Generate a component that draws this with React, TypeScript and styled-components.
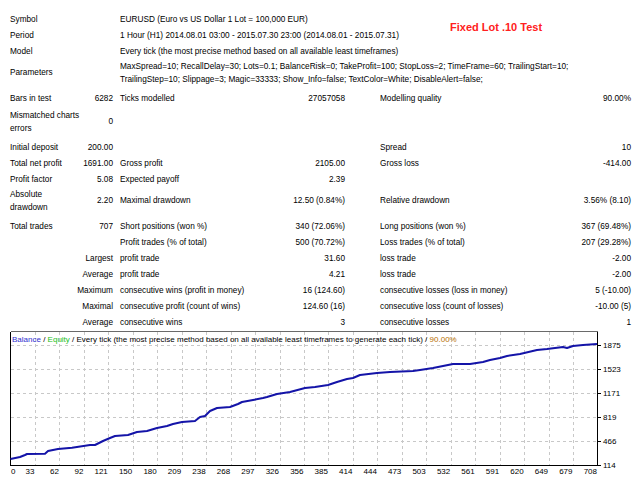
import React from "react";
import styled, { createGlobalStyle } from "styled-components";

const GlobalStyle = createGlobalStyle`
  html, body { margin: 0; padding: 0; background: #fff; }
  body {
    font-family: "Liberation Sans", Arial, sans-serif;
    font-size: 8.25px;
    color: #000;
  }
`;

const Page = styled.div`
  position: relative;
  width: 640px;
  height: 480px;
  overflow: hidden;
  box-sizing: border-box;
  padding: 11px 9px 0 10px;
`;

const Report = styled.div`
  position: relative;
  display: flex;
  flex-direction: column;
`;

const Title = styled.div`
  position: absolute;
  left: 440px;
  top: 9px;
  font-family: "Liberation Sans", Arial, sans-serif;
  font-weight: bold;
  font-size: 11px;
  line-height: 14px;
  color: #ff2020;
  white-space: nowrap;
`;

const Row = styled.div<{ $h?: number }>`
  display: grid;
  grid-template-columns: 73px 30px 147px 85px 185px 101px;
  height: ${(p) => p.$h ?? 16}px;
  align-items: center;
  line-height: 13px;
  white-space: nowrap;
`;

const Label = styled.div<{ $span?: number; $indent?: number; $right?: boolean }>`
  grid-column: span ${(p) => p.$span ?? 1};
  padding-left: ${(p) => p.$indent ?? 0}px;
  text-align: ${(p) => (p.$right ? "right" : "left")};
`;

const Value = styled.div<{ $span?: number }>`
  grid-column: span ${(p) => p.$span ?? 1};
  text-align: right;
`;

const Spacer = styled.div<{ $h: number }>`
  height: ${(p) => p.$h}px;
`;

const ChartBox = styled.div`
  margin-top: 1px;
  width: 630px;
  height: 149px;
`;

type Cells = (string | null)[];

const StatRow = ({ c }: { c: Cells }) => (
  <Row>
    <Label>{c[0]}</Label>
    <Value>{c[1]}</Value>
    <Label $indent={7}>{c[2]}</Label>
    <Value>{c[3]}</Value>
    <Label $indent={35}>{c[4]}</Label>
    <Value>{c[5]}</Value>
  </Row>
);

const SubRow = ({ c }: { c: Cells }) => (
  <Row>
    <Label $span={2} $right>
      {c[0]}
    </Label>
    <Label $indent={7}>{c[1]}</Label>
    <Value>{c[2]}</Value>
    <Label $indent={35}>{c[3]}</Label>
    <Value>{c[4]}</Value>
  </Row>
);

const InfoRow = ({ label, children, h }: { label: string; children: React.ReactNode; h?: number }) => (
  <Row $h={h}>
    <Label $span={2}>{label}</Label>
    <Label $span={4} $indent={7}>
      {children}
    </Label>
  </Row>
);

const curve: [number, number][] = [
  [10.5, 459], [20, 457], [25, 455], [27, 454], [45, 453.7], [48, 451], [58, 449], [72, 447.7],
  [90, 445], [95, 445], [103, 441], [110, 438], [115, 436], [128, 435], [137, 432], [147, 431],
  [157, 428], [167, 426], [173, 424], [182, 422], [195, 421], [200, 417], [205, 416], [210, 411],
  [217, 408], [230, 407], [238, 404], [242, 402], [253, 400], [263, 398], [267, 397], [277, 394],
  [290, 392], [305, 388], [315, 387], [328, 385], [337, 382], [347, 379], [353, 378], [360, 375],
  [377, 373], [390, 372], [413, 371], [420, 370], [433, 368], [443, 366], [453, 364], [470, 364],
  [483, 362], [490, 360], [500, 358], [507, 356], [520, 354], [537, 350], [547, 349], [563, 347],
  [567, 348], [573, 346], [583, 345], [597, 344],
];

const xLabels = [
  "0", "33", "62", "92", "121", "150", "180", "209", "238", "268", "297", "326", "356",
  "385", "414", "444", "473", "503", "532", "561", "591", "620", "649", "679", "708",
];
const yLabels: [string, number][] = [
  ["1875", 345], ["1523", 369], ["1171", 393], ["819", 417], ["466", 441], ["114", 465],
];

const L = 10.5;
const R = 597.5;
const T = 331.5;
const B = 465.5;
const step = (R - L) / 24;

const Chart = () => (
  <ChartBox>
    <svg width="630" height="149" viewBox="10 331 630 149" xmlns="http://www.w3.org/2000/svg">
      <g stroke="#c8c8c8" strokeWidth="1" strokeDasharray="3 3" shapeRendering="crispEdges">
        {Array.from({ length: 23 }, (_, i) => {
          const x = Math.round(L + step * (i + 1)) + 0.5;
          return <line key={"v" + i} x1={x} y1={T} x2={x} y2={B} />;
        })}
        {[345, 369, 393, 417, 441].map((y) => (
          <line key={"h" + y} x1={L} y1={y + 0.5} x2={R} y2={y + 0.5} />
        ))}
      </g>
      <g stroke="#000" strokeWidth="1" shapeRendering="crispEdges" fill="none">
        <line x1={L} y1={T} x2={R} y2={T} stroke="#6a6a6a" />
        <line x1={L} y1={T} x2={L} y2={B} />
        <line x1={L} y1={B} x2={R} y2={B} />
        <line x1={R} y1={T} x2={R} y2={B} />
        {yLabels.map(([, y]) => (
          <line key={"t" + y} x1={R} y1={y + 0.5} x2={R + 3} y2={y + 0.5} />
        ))}
      </g>
      <polyline
        points={curve.map((p) => p.join(",")).join(" ")}
        fill="none"
        stroke="#1414a8"
        strokeWidth="2"
        strokeLinejoin="round"
      />
      <text x="12" y="342" fontFamily="Liberation Sans, Arial, sans-serif" fontSize="8" fill="#000">
        <tspan fill="#3030d0">Balance</tspan>
        <tspan> / </tspan>
        <tspan fill="#20c020">Equity</tspan>
        <tspan> / Every tick (the most precise method based on all available least timeframes to generate each tick) / </tspan>
        <tspan fill="#b87000">90.00%</tspan>
      </text>
      <g fontFamily="Liberation Sans, Arial, sans-serif" fontSize="8" fill="#000">
        {yLabels.map(([t, y]) => (
          <text key={t} x="603" y={y + 3}>
            {t}
          </text>
        ))}
        {xLabels.map((t, i) =>
          i === 0 ? (
            <text key={t} x="11" y="474">
              {t}
            </text>
          ) : (
            <text key={t} x={L + step * i - 0.5} y="474" textAnchor="end">
              {t}
            </text>
          )
        )}
      </g>
    </svg>
  </ChartBox>
);

export default function App() {
  return (
    <>
      <GlobalStyle />
      <Page>
        <Report>
          <Title>Fixed Lot .10 Test</Title>
          <InfoRow label="Symbol">EURUSD (Euro vs US Dollar 1 Lot = 100,000 EUR)</InfoRow>
          <InfoRow label="Period">1 Hour (H1) 2014.08.01 03:00 - 2015.07.30 23:00 (2014.08.01 - 2015.07.31)</InfoRow>
          <InfoRow label="Model">Every tick (the most precise method based on all available least timeframes)</InfoRow>
          <InfoRow label="Parameters" h={27}>
            MaxSpread=10; RecallDelay=30; Lots=0.1; BalanceRisk=0; TakeProfit=100; StopLoss=2; TimeFrame=60; TrailingStart=10;
            <br />
            TrailingStep=10; Slippage=3; Magic=33333; Show_Info=false; TextColor=White; DisableAlert=false;
          </InfoRow>
          <Spacer $h={4} />
          <StatRow c={["Bars in test", "6282", "Ticks modelled", "27057058", "Modelling quality", "90.00%"]} />
          <Spacer $h={2} />
          <Row $h={27}>
            <Label>
              Mismatched charts
              <br />
              errors
            </Label>
            <Value>0</Value>
          </Row>
          <Spacer $h={4} />
          <StatRow c={["Initial deposit", "200.00", null, null, "Spread", "10"]} />
          <StatRow c={["Total net profit", "1691.00", "Gross profit", "2105.00", "Gross loss", "-414.00"]} />
          <StatRow c={["Profit factor", "5.08", "Expected payoff", "2.39", null, null]} />
          <Row $h={27}>
            <Label>
              Absolute
              <br />
              drawdown
            </Label>
            <Value>2.20</Value>
            <Label $indent={7}>Maximal drawdown</Label>
            <Value>12.50 (0.84%)</Value>
            <Label $indent={35}>Relative drawdown</Label>
            <Value>3.56% (8.10)</Value>
          </Row>
          <Spacer $h={4} />
          <StatRow c={["Total trades", "707", "Short positions (won %)", "340 (72.06%)", "Long positions (won %)", "367 (69.48%)"]} />
          <SubRow c={[null, "Profit trades (% of total)", "500 (70.72%)", "Loss trades (% of total)", "207 (29.28%)"]} />
          <SubRow c={["Largest", "profit trade", "31.60", "loss trade", "-2.00"]} />
          <SubRow c={["Average", "profit trade", "4.21", "loss trade", "-2.00"]} />
          <SubRow c={["Maximum", "consecutive wins (profit in money)", "16 (124.60)", "consecutive losses (loss in money)", "5 (-10.00)"]} />
          <SubRow c={["Maximal", "consecutive profit (count of wins)", "124.60 (16)", "consecutive loss (count of losses)", "-10.00 (5)"]} />
          <SubRow c={["Average", "consecutive wins", "3", "consecutive losses", "1"]} />
        </Report>
        <Chart />
      </Page>
    </>
  );
}
